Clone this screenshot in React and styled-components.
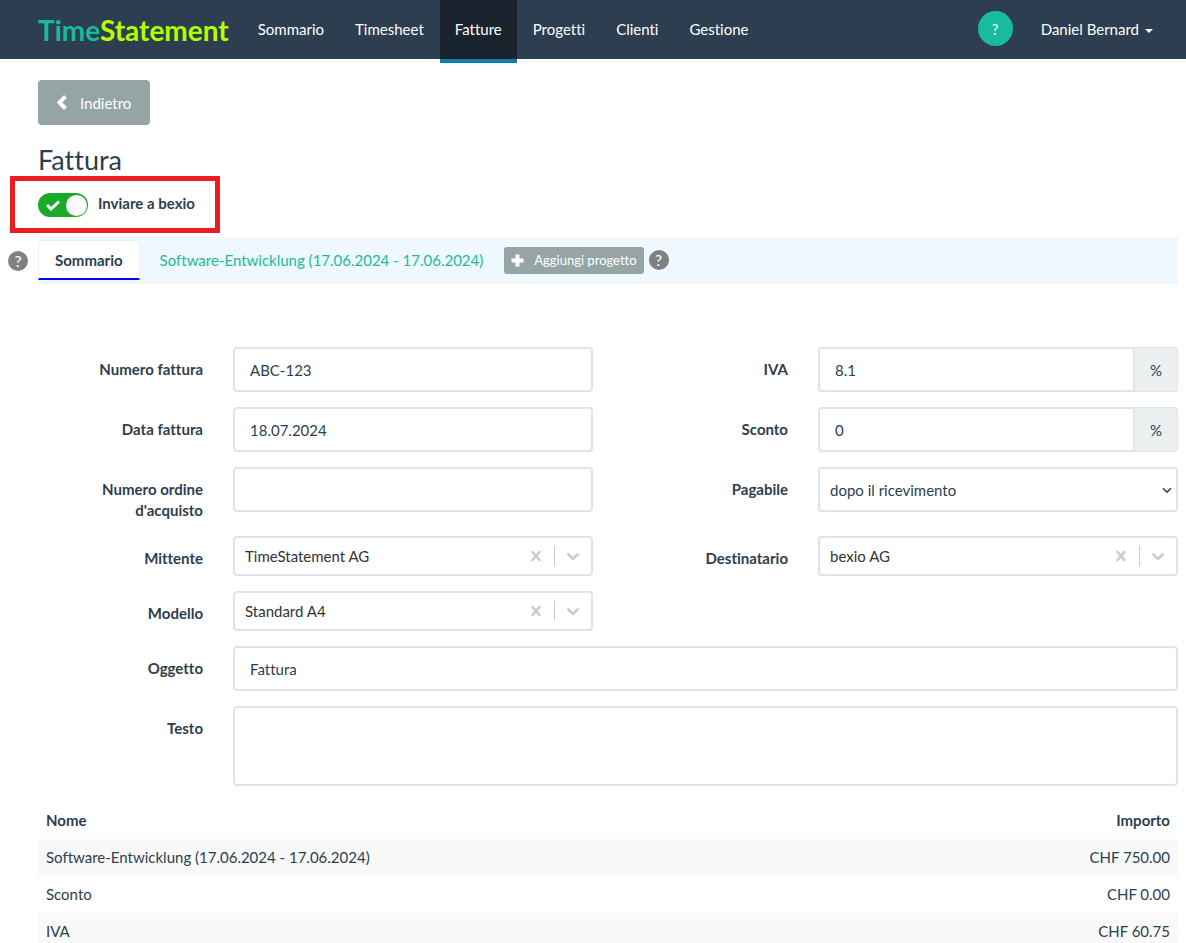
import React from "react";
import styled, { createGlobalStyle } from "styled-components";

const Colors = {
    navy: "#2c3e50",
    dark: "#1a242f",
    green: "#18bc9c",
    lime: "#b2ff00",
    blue: "#0f7ea8",
    grey: "#95a5a6",
    border: "#dce4ec",
    light: "#ecf0f1",
    lightblue: "#eff7ff",
    stripe: "#f9f9f9",
    red: "#ed1c24",
};

const GlobalStyle = createGlobalStyle`
    *{box-sizing:border-box;}
    body{margin:0;background:#fff;color:${Colors.navy};font-family:Lato,"Liberation Sans",sans-serif;font-size:15px;line-height:21px;font-variant-ligatures:none;}
    button,input,select,textarea{font-family:inherit;font-size:inherit;font-variant-ligatures:inherit;color:inherit;}
    a{text-decoration:none;}
`;

const Navbar = styled.header`
    display:flex;align-items:flex-start;height:59px;padding:0 18px 0 38px;background:${Colors.navy};
`;
const Brand = styled.a`
    color:${Colors.green};font-size:28px;font-weight:700;line-height:61px;margin-right:14px;
    & span{color:${Colors.lime};}
`;
const Menu = styled.nav`
    display:flex;flex:1;gap:1px;
`;
const MenuLink = styled.a`
    height:${p => p.$active ? "63px" : "59px"};padding:19px 15px;color:#fff;
    background:${p => p.$active ? Colors.dark : "transparent"};
    border-bottom:${p => p.$active ? `4px solid ${Colors.blue}` : "none"};
`;
const HelpButton = styled.button`
    width:35px;height:35px;margin:11px 28px 0 0;padding:0;border:none;border-radius:50%;background:${Colors.green};color:#fff;
`;
const UserButton = styled.button`
    display:flex;align-items:center;gap:6px;height:59px;padding:0 15px 2px 0;border:none;background:none;color:#fff;
    &:after{content:"";margin-top:4px;border-top:4px solid;border-left:4px solid transparent;border-right:4px solid transparent;}
`;

const Main = styled.main`
    padding:21px 8px 0;
`;
const Content = styled.div`
    padding-left:30px;
`;
const BackButton = styled.button`
    display:flex;align-items:center;gap:12px;height:45px;padding:0 19px 0 17px;border:none;border-radius:4px;background:${Colors.grey};color:#fff;
`;
const Title = styled.h1`
    margin:20px 0 2px;font-size:27px;font-weight:400;line-height:29px;
`;
const Highlight = styled.div`
    width:210px;height:57px;margin-left:2px;padding:12px 23px;border:5px solid ${Colors.red};
`;
const SwitchLabel = styled.label`
    display:flex;gap:10px;font-weight:700;white-space:nowrap;
`;
const Switch = styled.span`
    position:relative;display:block;width:50px;height:24px;
    & input{
        appearance:none;display:block;width:50px;height:24px;margin:0;border-radius:12px;background:#19ab27;
        &:after{content:"";position:absolute;top:2px;right:1px;width:21px;height:21px;border-radius:50%;background:#fafafa;}
    }
    & svg{position:absolute;top:7px;left:8px;pointer-events:none;}
`;

const TabRow = styled.div`
    display:flex;align-items:center;gap:10px;margin-top:4px;
`;
const HelpDot = styled.button`
    width:20px;height:20px;padding:0;border:none;border-radius:50%;background:#808080;color:#fff;font-size:16px;line-height:20px;
`;
const TabBar = styled.div`
    display:flex;flex:1;align-items:center;height:47px;background:${Colors.lightblue};border-bottom:1px solid ${Colors.light};
`;
const Tab = styled.button`
    height:40px;border:1px solid transparent;border-radius:4px 4px 0 0;background:none;color:${Colors.green};padding:0 16px;margin-right:3px;
    ${p => p.$active && `
        background:#fff;color:${Colors.navy};font-weight:700;border-color:${Colors.light};border-bottom:2px solid #00f;
    `}
`;
const AddButton = styled.button`
    display:flex;align-items:center;gap:10px;height:27px;margin:0 5px 0 1px;padding:0 7px;border:none;border-radius:3px;background:${Colors.grey};color:#fff;font-size:13px;
`;

const Form = styled.form`
    display:grid;grid-template-columns:repeat(12,1fr);gap:15px 30px;align-items:start;margin-top:63px;
`;
const Label = styled.label`
    grid-column:${p => p.$right ? "7 / span 2" : "1 / span 2"};padding-top:12px;font-weight:700;text-align:right;
`;
const Field = styled.div`
    display:flex;grid-column-end:span ${p => p.$wide ? 10 : 4};
`;
const Input = styled.input`
    flex:1;min-width:0;height:45px;padding:0 15px;border:2px solid ${Colors.border};border-radius:4px;background:#fff;outline:none;
    ${p => p.$addon && "border-radius:4px 0 0 4px;"}
`;
const Addon = styled.span`
    width:43px;height:45px;border:1px solid ${Colors.border};border-left:none;border-radius:0 4px 4px 0;background:${Colors.light};line-height:45px;text-align:center;
`;
const SelectWrap = styled.div`
    position:relative;flex:1;
    & select{
        appearance:none;display:block;width:100%;height:45px;padding:0 30px 0 10px;border:2px solid ${Colors.border};border-radius:4px;background:#fff;
    }
    & svg{position:absolute;top:20px;right:6px;pointer-events:none;}
`;
const Textarea = styled.textarea`
    flex:1;min-width:0;height:80px;padding:10px 15px;border:2px solid ${Colors.border};border-radius:4px;resize:none;outline:none;
`;
const Combo = styled.div`
    display:flex;flex:1;align-items:center;min-width:0;height:40px;border:2px solid ${Colors.border};border-radius:4px;
    & input{flex:1;min-width:0;height:36px;padding:0 10px;border:none;background:none;color:#333;outline:none;}
    & button{display:flex;padding:8px;border:none;background:none;color:#ccc;}
    & svg{fill:currentColor;stroke:currentColor;stroke-width:0.4;}
    & i{width:1px;height:20px;background:#ccc;}
`;

const Table = styled.table`
    width:100%;margin-top:16px;border-collapse:collapse;
    & th,& td{padding:8px;text-align:left;}
    & th:last-child,& td:last-child{text-align:right;}
    & tbody tr:nth-child(odd){background:${Colors.stripe};}
`;

const ComboField = ({ id, value }) => (
    <Field>
        <Combo>
            <input id={id} role="combobox" aria-expanded="false" defaultValue={value} />
            <button type="button" aria-label="Cancella">
                <svg width="20" height="20" viewBox="0 0 20 20">
                    <path d="M14.348 14.849c-0.469 0.469-1.229 0.469-1.697 0l-2.651-3.030-2.651 3.029c-0.469 0.469-1.229 0.469-1.697 0-0.469-0.469-0.469-1.229 0-1.697l2.758-3.15-2.759-3.152c-0.469-0.469-0.469-1.228 0-1.697s1.228-0.469 1.697 0l2.652 3.031 2.651-3.031c0.469-0.469 1.228-0.469 1.697 0s0.469 1.229 0 1.697l-2.758 3.152 2.758 3.15c0.469 0.469 0.469 1.229 0 1.698z" />
                </svg>
            </button>
            <i />
            <button type="button" aria-label="Apri">
                <svg width="20" height="20" viewBox="0 0 20 20">
                    <path d="M4.516 7.548c0.436-0.446 1.043-0.481 1.576 0l3.908 3.747 3.908-3.747c0.533-0.481 1.141-0.446 1.574 0 0.436 0.445 0.408 1.197 0 1.615-0.406 0.418-4.695 4.502-4.695 4.502-0.217 0.223-0.502 0.335-0.787 0.335s-0.57-0.112-0.789-0.335c0 0-4.287-4.084-4.695-4.502s-0.436-1.17 0-1.615z" />
                </svg>
            </button>
        </Combo>
    </Field>
);

const menu = ["Sommario", "Timesheet", "Fatture", "Progetti", "Clienti", "Gestione"];
const rows = [
    ["Software-Entwicklung (17.06.2024 - 17.06.2024)", "CHF 750.00"],
    ["Sconto", "CHF 0.00"],
    ["IVA", "CHF 60.75"],
];

const App = () => {
    return (
        <>
            <GlobalStyle />
            <Navbar>
                <Brand href="#">Time<span>Statement</span></Brand>
                <Menu>
                    {menu.map(item => (
                        <MenuLink key={item} href="#" $active={item === "Fatture"}>{item}</MenuLink>
                    ))}
                </Menu>
                <HelpButton>?</HelpButton>
                <UserButton>Daniel Bernard</UserButton>
            </Navbar>
            <Main>
                <Content>
                    <BackButton>
                        <svg width="13" height="15" viewBox="0 0 13 15" fill="none" stroke="#fff" strokeWidth="4">
                            <path d="M10.500 1.500L4.500 7.500L10.500 13.500" />
                        </svg>
                        Indietro
                    </BackButton>
                    <Title>Fattura</Title>
                </Content>
                <Highlight>
                    <SwitchLabel>
                        <Switch>
                            <input type="checkbox" role="switch" defaultChecked />
                            <svg width="14" height="11" viewBox="0 0 14 11" fill="none" stroke="#fff" strokeWidth="3">
                                <path d="M1 5L5 9L13 1.500" />
                            </svg>
                        </Switch>
                        Inviare a bexio
                    </SwitchLabel>
                </Highlight>
                <TabRow>
                    <HelpDot>?</HelpDot>
                    <TabBar>
                        <Tab $active>Sommario</Tab>
                        <Tab>Software-Entwicklung (17.06.2024 - 17.06.2024)</Tab>
                        <AddButton>
                            <svg width="13" height="13" viewBox="0 0 13 13" fill="none" stroke="#fff" strokeWidth="4">
                                <path d="M6.500 0.500V12.500M0.500 6.500H12.500" />
                            </svg>
                            Aggiungi progetto
                        </AddButton>
                        <HelpDot>?</HelpDot>
                    </TabBar>
                </TabRow>
                <Content>
                    <Form>
                        <Label htmlFor="number">Numero fattura</Label>
                        <Field><Input id="number" defaultValue="ABC-123" /></Field>
                        <Label $right htmlFor="vat">IVA</Label>
                        <Field><Input $addon id="vat" defaultValue="8.1" /><Addon>%</Addon></Field>

                        <Label htmlFor="date">Data fattura</Label>
                        <Field><Input id="date" defaultValue="18.07.2024" /></Field>
                        <Label $right htmlFor="discount">Sconto</Label>
                        <Field><Input $addon id="discount" defaultValue="0" /><Addon>%</Addon></Field>

                        <Label htmlFor="order">Numero ordine d'acquisto</Label>
                        <Field><Input id="order" /></Field>
                        <Label $right htmlFor="payable">Pagabile</Label>
                        <Field>
                            <SelectWrap>
                                <select id="payable">
                                    <option>dopo il ricevimento</option>
                                </select>
                                <svg width="10" height="7" viewBox="0 0 10 7" fill="none" stroke={Colors.navy} strokeWidth="1.6">
                                    <path d="M1 1.200L5 5.200L9 1.200" />
                                </svg>
                            </SelectWrap>
                        </Field>

                        <Label htmlFor="sender">Mittente</Label>
                        <ComboField id="sender" value="TimeStatement AG" />
                        <Label $right htmlFor="recipient">Destinatario</Label>
                        <ComboField id="recipient" value="bexio AG" />

                        <Label htmlFor="template">Modello</Label>
                        <ComboField id="template" value="Standard A4" />

                        <Label htmlFor="subject">Oggetto</Label>
                        <Field $wide><Input id="subject" defaultValue="Fattura" /></Field>

                        <Label htmlFor="text">Testo</Label>
                        <Field $wide><Textarea id="text" /></Field>
                    </Form>
                    <Table>
                        <thead>
                            <tr><th>Nome</th><th>Importo</th></tr>
                        </thead>
                        <tbody>
                            {rows.map(([name, amount]) => (
                                <tr key={name}><td>{name}</td><td>{amount}</td></tr>
                            ))}
                        </tbody>
                    </Table>
                </Content>
            </Main>
        </>
    );
};
export default App;
